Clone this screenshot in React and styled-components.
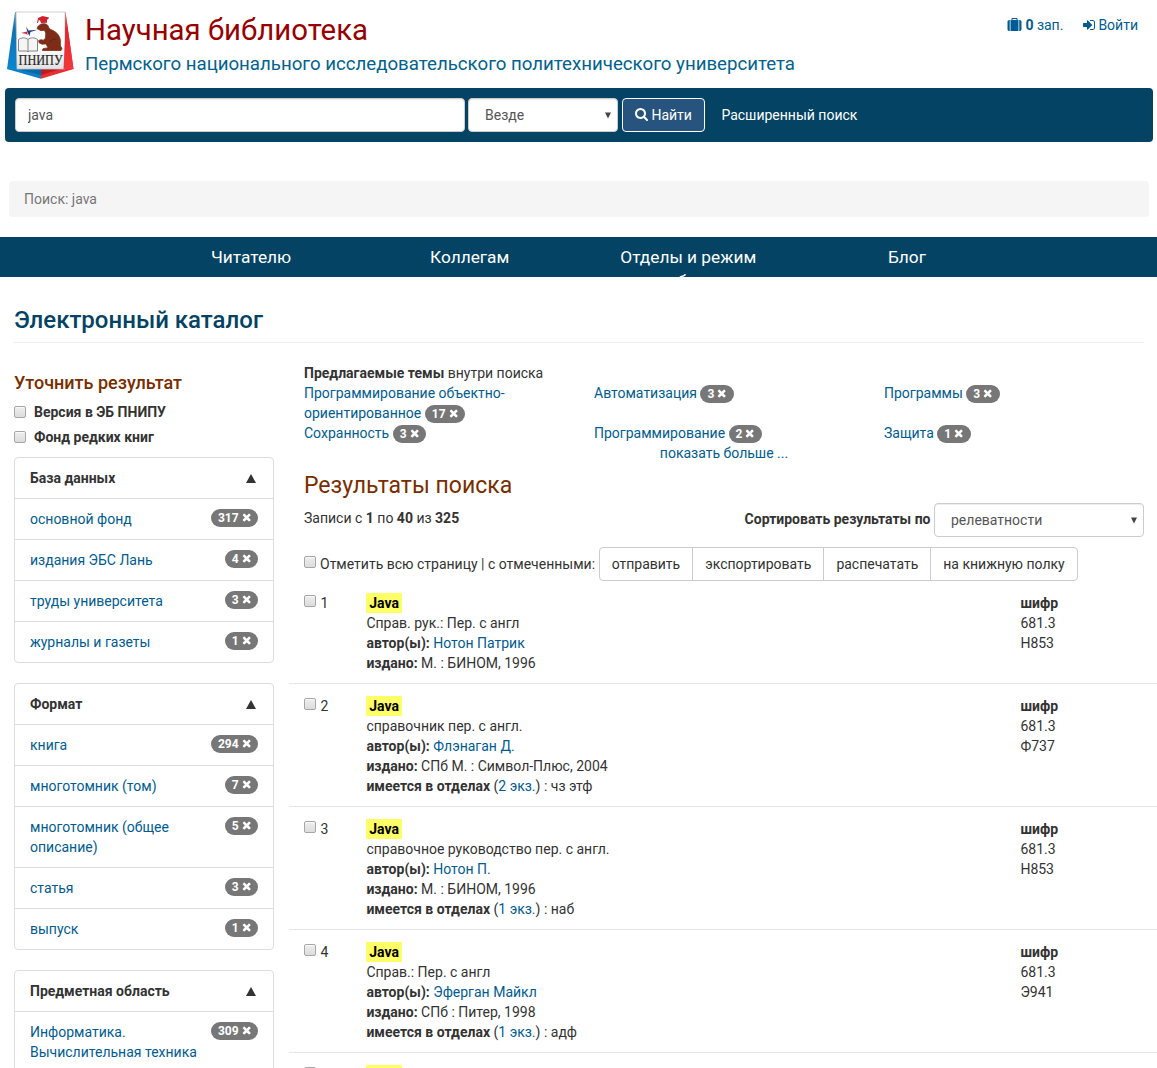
import React from "react";
import styled, { createGlobalStyle } from "styled-components";

const Global = createGlobalStyle`
  * { box-sizing: border-box; }
  html { overflow: hidden; }
  body {
    margin: 0;
    height: 1068px;
    overflow: hidden;
    background: #fff;
    color: #333;
    font: 14px/20px Roboto, "Liberation Sans", sans-serif;
  }
`;

const ICONS = {
  suitcase:
    "M640 256h512v-128h-512v128zm-352 0v1408h-64q-92 0-158-66t-66-158v-960q0-92 66-158t158-66h64zm1120 0v1408h-1024v-1408h128v-160q0-40 28-68t68-28h576q40 0 68 28t28 68v160h128zm384 224v960q0 92-66 158t-158 66h-64v-1408h64q92 0 158 66t66 158z",
  signIn:
    "M1312 896q0 26-19 45l-544 544q-19 19-45 19t-45-19-19-45v-288h-448q-26 0-45-19t-19-45v-384q0-26 19-45t45-19h448v-288q0-26 19-45t45-19 45 19l544 544q19 19 19 45zm352-352v704q0 119-84.5 203.5t-203.5 84.5h-320q-13 0-22.5-9.5t-9.5-22.5q0-4-1-20t-.5-26.5 3-23.5 10-19.5 20.5-6.5h320q66 0 113-47t47-113v-704q0-66-47-113t-113-47h-312l-11.5-1-11.5-3-8-5.5-7-9-2-13.5q0-4-1-20t-.5-26.5 3-23.5 10-19.5 20.5-6.5h320q119 0 203.5 84.5t84.5 203.5z",
  search:
    "M1216 832q0-185-131.5-316.5t-316.5-131.5-316.5 131.5-131.5 316.5 131.5 316.5 316.5 131.5 316.5-131.5 131.5-316.5zm512 832q0 52-38 90t-90 38q-54 0-90-38l-343-342q-179 124-399 124-143 0-273.5-55.5t-225-150-150-225-55.5-273.5 55.5-273.5 150-225 225-150 273.5-55.5 273.5 55.5 225 150 150 225 55.5 273.5q0 220-124 399l343 343q37 37 37 90z",
  times:
    "M1490 1322q0 40-28 68l-136 136q-28 28-68 28t-68-28l-294-294-294 294q-28 28-68 28t-68-28l-136-136q-28-28-28-68t28-68l294-294-294-294q-28-28-28-68t28-68l136-136q28-28 68-28t68 28l294 294 294-294q28-28 68-28t68 28l136 136q28 28 28 68t-28 68l-294 294 294 294q28 28 28 68z",
};

const Svg = styled.svg`
  fill: currentColor;
  flex: none;
`;

const Icon = ({ name, width, height, box }) => (
  <Svg width={width} height={height} viewBox={box} aria-hidden="true">
    <path d={ICONS[name]} />
  </Svg>
);

const Link = styled.a`
  color: #005c92;
  text-decoration: none;
  cursor: pointer;
`;

const Header = styled.header`
  display: flex;
  height: 88px;
  padding-left: 5px;
`;

const Brand = styled.div`
  padding: 12px 0 0 10px;
  flex: 1;
`;

const Title = styled.div`
  color: #990000;
  font-size: 29.4px;
  line-height: 36px;
`;

const Subtitle = styled.div`
  margin-top: 5px;
  color: #00628f;
  font-size: 18.66px;
  line-height: 22px;
`;

const Account = styled.nav`
  display: flex;
  gap: 20px;
  padding: 15px 19px 0 0;
`;

const AccountLink = styled(Link)`
  display: flex;
  align-items: center;
  gap: 3px;
  height: 20px;
  white-space: pre;
`;

const SearchBar = styled.form`
  display: flex;
  align-items: center;
  gap: 4px;
  height: 54px;
  margin: 0 4px 0 5px;
  padding: 0 10px;
  border-radius: 4px;
  background: #044364;
`;

const fieldStyles = `
  height: 34px;
  border: 1px solid #ccc;
  border-radius: 4px;
  background: #fff;
  color: #555;
  font: 14px/20px Roboto, "Liberation Sans", sans-serif;
  box-shadow: inset 0 1px 1px rgba(0, 0, 0, 0.075);
`;

const Query = styled.input`
  ${fieldStyles}
  width: 450px;
  margin-right: -1px;
  padding: 6px 12px;
  outline: 0;
`;

const SelectBox = styled.div`
  ${fieldStyles}
  display: flex;
  align-items: center;
  justify-content: space-between;
  width: ${(p) => p.$width}px;
  padding: 0 6px 0 16px;
  font-weight: 400;
`;

const Arrow = styled.svg`
  width: 6px;
  height: 7px;
  fill: #444;
`;

const Select = ({ width, children }) => (
  <SelectBox $width={width} role="combobox">
    {children}
    <Arrow viewBox="0 0 6 7">
      <path d="M0 .5h6L3 6.500z" />
    </Arrow>
  </SelectBox>
);

const SearchButton = styled.button`
  display: flex;
  align-items: center;
  gap: 3.4px;
  width: 83px;
  height: 34px;
  padding: 0 12px;
  border: 1px solid #fff;
  border-radius: 4px;
  background: #26547f;
  color: #fff;
  font: 14px/20px Roboto, "Liberation Sans", sans-serif;
`;

const Advanced = styled.a`
  margin-left: 12.4px;
  color: #fff;
`;

const Breadcrumb = styled.div`
  height: 36px;
  margin: 39px 8px 20px 9px;
  padding: 8px 15px;
  border-radius: 4px;
  background: #f5f5f5;
  color: #777;
`;

const MainNav = styled.nav`
  display: flex;
  justify-content: center;
  height: 40px;
  padding: 8px 0 0 1px;
  overflow: hidden;
  background: #044364;
`;

const NavItem = styled.a`
  width: 218.6px;
  padding: 0 20px;
  color: #fff;
  font-size: 17.3px;
  line-height: 24px;
  text-align: center;
`;

const PageTitle = styled.h1`
  height: 47px;
  margin: 19px 13px 0 14px;
  padding-top: 10px;
  border-bottom: 1px solid #eee;
  color: #044364;
  font-size: 24px;
  font-weight: 500;
  line-height: 28px;
`;

const Columns = styled.main`
  display: flex;
  align-items: flex-start;
`;

const Sidebar = styled.aside`
  flex: none;
  width: 260px;
  margin: 30px 15px 0 14px;
`;

const SideTitle = styled.h2`
  margin: 0 0 9px;
  color: #7a2e00;
  font-size: 18px;
  font-weight: 500;
  line-height: 20px;
`;

const Filters = styled.div`
  margin-bottom: 10px;
`;

const CheckLabel = styled.label`
  display: flex;
  align-items: center;
  gap: 8px;
  height: 20px;
  font-weight: 700;

  & + & {
    margin-top: 5px;
  }
`;

const Checkbox = styled.input.attrs({ type: "checkbox" })`
  appearance: none;
  flex: none;
  width: 12px;
  height: 12px;
  margin: 0;
  border: 1px solid #a6a6a6;
  border-radius: 2px;
  background: linear-gradient(#eee, #dcdcdc);
  box-shadow: inset 0 1px 1px rgba(255, 255, 255, 0.75);
`;

const Facet = styled.section`
  margin-bottom: 20px;
  border: 1px solid #ddd;
  border-radius: 4px;
`;

const FacetRow = styled.div`
  display: flex;
  justify-content: space-between;
  align-items: flex-start;
  padding: 10px 15px;

  & + & {
    border-top: 1px solid #ddd;
  }
`;

const FacetHead = styled(FacetRow)`
  font-weight: 700;
`;

const Triangle = styled.svg`
  width: 10px;
  height: 9px;
  margin: 6px 2px 0 0;
  fill: #333;
`;

const FacetLink = styled(Link)`
  max-width: 170px;
`;

const BadgeBox = styled.span`
  display: inline-flex;
  flex: none;
  align-items: center;
  gap: 3px;
  height: 18px;
  padding: 0 7px;
  border-radius: 10px;
  background: #777;
  color: #fff;
  font-size: 12px;
  font-weight: 700;
  line-height: 12px;
`;

const Badge = ({ count }) => (
  <BadgeBox>
    {count}
    <Icon name="times" width={9.4} height={12} box="192 128 1408 1792" />
  </BadgeBox>
);

const Content = styled.div`
  flex: 1;
  padding-top: 20px;
`;

const Inner = styled.div`
  margin: 0 13px 0 15px;
`;

const Topics = styled.div`
  display: grid;
  grid-template-columns: repeat(3, 290px);
  margin-right: -30px;
`;

const Topic = styled.div`
  max-width: 230px;

  ${BadgeBox} {
    margin-top: 2px;
    vertical-align: top;
  }
`;

const More = styled.div`
  text-align: center;
`;

const ResultsTitle = styled.h2`
  margin: 9px 0 3px;
  color: #7a2e00;
  font-size: 23px;
  font-weight: 400;
  line-height: 28px;
`;

const SortRow = styled.div`
  display: flex;
  justify-content: space-between;
  align-items: flex-start;
  height: 44px;
`;

const Count = styled.div`
  padding-top: 5px;
`;

const Sort = styled.div`
  display: flex;
  align-items: center;
  gap: 3.5px;
`;

const SortLabel = styled.b`
  padding-bottom: 2px;
`;

const BulkRow = styled.div`
  display: flex;
  align-items: center;
  gap: 4px;
  height: 34px;
  white-space: nowrap;

  & > input {
    margin-bottom: 4px;
  }
`;

const ButtonGroup = styled.div`
  display: flex;
`;

const GroupButton = styled.button`
  height: 34px;
  margin-left: -1px;
  padding: 0 12px;
  border: 1px solid #ccc;
  background: #fff;
  color: #333;
  font: 14px/20px Roboto, "Liberation Sans", sans-serif;

  &:first-child {
    margin-left: -0.4px;
    border-radius: 4px 0 0 4px;
  }

  &:last-child {
    border-radius: 0 4px 4px 0;
  }
`;

const RecordRow = styled.article`
  display: grid;
  grid-template-columns: 62.4px 654px 1fr;
  padding: 12px 0 10px 15px;
  border-bottom: 1px solid #e5e5e5;
`;

const Number = styled.div`
  display: flex;
  gap: 4.5px;

  & > input {
    margin-top: 2px;
  }
`;

const Mark = styled.strong`
  display: block;
  width: fit-content;
  height: 20px;
  padding: 0 2.8px;
  background: #ffff66;
  color: #000;
`;

const LogoSvg = styled.svg`
  flex: none;
  width: 70px;
  height: 70px;
  margin-top: 10px;
`;

const Logo = () => (
  <LogoSvg viewBox="5 10 70 70">
    <defs>
      <linearGradient id="blue" x1="0" y1="0" x2="0" y2="1">
        <stop offset="0" stopColor="#5b94bd" />
        <stop offset=".3" stopColor="#0d72b4" />
        <stop offset="1" stopColor="#0a86d0" />
      </linearGradient>
      <linearGradient id="red" x1="0" y1="0" x2="0" y2="1">
        <stop offset="0" stopColor="#d8777a" />
        <stop offset=".3" stopColor="#e4252b" />
        <stop offset="1" stopColor="#f03a3c" />
      </linearGradient>
      <linearGradient id="paper" x1="0" y1="0" x2="0" y2="1">
        <stop offset=".6" stopColor="#fff" />
        <stop offset="1" stopColor="#e2e2e2" />
      </linearGradient>
    </defs>
    <path d="M15 12L7 69l10.500 1.500L17 12z" fill="url(#blue)" />
    <path d="M65.500 12l8 57-13 1.500L64 12z" fill="url(#red)" />
    <path d="M7 69h34v9.700z" fill="#0a80c8" />
    <path d="M17 69h24v6z" fill="#0868a8" />
    <path d="M41 69h32.500L41 78.700z" fill="#ea2c30" />
    <path d="M41 69h20l-20 6z" fill="#b51c24" />
    <path d="M16 12h49v57H17z" fill="url(#paper)" stroke="#c4c4c4" strokeWidth=".8" />
    <path d="M65.500 12l8 57H63.500l1.500-30z" fill="url(#red)" />
    <path
      d="M37 28.500c1-3 3-4.500 6-4.800 3-.2 5 1 5.500 3.300.5 2 2.500 2.600 4.500 3.500 4 2 6.500 5 7.300 9 .4 2.500-.2 4.500.2 6.500l1.500 2.800-1 1.700H42.500c-.5-1.500.7-2.200 3-2.300l2.500-.3-2-4-4 .3-3-1.500-.3-2.200 2.500-.8 2.300.6 2-2.300.3-5-1.500-2.700-3.300.4z"
      fill="#7d2d17"
      stroke="#7d2d17"
      strokeWidth=".8"
    />
    <path d="M50 42c1-2.500 3.500-3.500 6-2.500" fill="none" stroke="#592015" strokeWidth=".7" />
    <path d="M38 18l4.500-2 6.500 1.500-.7 1.500-1.300.7v3l-6 .2-1-2.700-1.500.3-.5 2.500h-1z" fill="#cf2030" />
    <path
      d="M18.500 39.500c3-2.200 7-2.200 9.500 0 2.500-2.200 6.500-2.200 9.500 0v11.500h-8l-1.500.7-1.500-.7h-8zM28 39.500v12"
      fill="#f5f5f5"
      stroke="#777"
      strokeWidth=".9"
    />
    <path d="M21 33l6-1.500.7 3.500-2-1.200z" fill="#d62434" />
    <path d="M26 26.500l2.500 4 9-.8-7 2.300-1 4-2-3.500z" fill="#263c83" />
    <text
      x="40.600"
      y="65"
      textAnchor="middle"
      textLength="44"
      lengthAdjust="spacingAndGlyphs"
      fontFamily="Liberation Serif, serif"
      fontSize="14"
      fill="#292929"
      stroke="#292929"
      strokeWidth=".2"
    >
      ПНИПУ
    </text>
  </LogoSvg>
);

const facets = [
  {
    title: "База данных",
    items: [
      ["основной фонд", 317],
      ["издания ЭБС Лань", 4],
      ["труды университета", 3],
      ["журналы и газеты", 1],
    ],
  },
  {
    title: "Формат",
    items: [
      ["книга", 294],
      ["многотомник (том)", 7],
      ["многотомник (общее описание)", 5],
      ["статья", 3],
      ["выпуск", 1],
    ],
  },
  {
    title: "Предметная область",
    items: [["Информатика. Вычислительная техника", 309]],
  },
];

const topics = [
  ["Программирование объектно-ориентированное", 17],
  ["Автоматизация", 3],
  ["Программы", 3],
  ["Сохранность", 3],
  ["Программирование", 2],
  ["Защита", 1],
];

const records = [
  { note: "Справ. рук.: Пер. с англ", author: "Нотон Патрик", issued: "М. : БИНОМ, 1996", code: "Н853" },
  { note: "справочник пер. с англ.", author: "Флэнаган Д.", issued: "СПб М. : Символ-Плюс, 2004", copies: "2 экз.", place: "чз этф", code: "Ф737" },
  { note: "справочное руководство пер. с англ.", author: "Нотон П.", issued: "М. : БИНОМ, 1996", copies: "1 экз.", place: "наб", code: "Н853" },
  { note: "Справ.: Пер. с англ", author: "Эферган Майкл", issued: "СПб : Питер, 1998", copies: "1 экз.", place: "адф", code: "Э941" },
  {},
];

const Record = ({ index, data }) => (
  <RecordRow>
    <Number>
      <Checkbox />
      {index}
    </Number>
    <div>
      <Mark>Java</Mark>
      {data.note && (
        <>
          <div>{data.note}</div>
          <div>
            <b>автор(ы):</b> <Link>{data.author}</Link>
          </div>
          <div>
            <b>издано:</b> {data.issued}
          </div>
        </>
      )}
      {data.copies && (
        <div>
          <b>имеется в отделах</b> (<Link>{data.copies}</Link>) : {data.place}
        </div>
      )}
    </div>
    {data.code && (
      <div>
        <b>шифр</b>
        <div>681.3</div>
        <div>{data.code}</div>
      </div>
    )}
  </RecordRow>
);

export default function App() {
  return (
    <>
      <Global />
      <Header>
        <Logo />
        <Brand>
          <Title>Научная библиотека</Title>
          <Subtitle>Пермского национального исследовательского политехнического университета</Subtitle>
        </Brand>
        <Account>
          <AccountLink>
            <Icon name="suitcase" width={15} height={14} box="0 0 1792 1792" />
            <span>
              <b>0</b> зап.
            </span>
          </AccountLink>
          <AccountLink>
            <Icon name="signIn" width={12} height={14} box="128 0 1536 1792" />
            Войти
          </AccountLink>
        </Account>
      </Header>
      <SearchBar>
        <Query defaultValue="java" />
        <Select width={150}>Везде</Select>
        <SearchButton type="button">
          <Icon name="search" width={13} height={14} box="64 128 1664 1792" />
          Найти
        </SearchButton>
        <Advanced>Расширенный поиск</Advanced>
      </SearchBar>
      <Breadcrumb>Поиск: java</Breadcrumb>
      <MainNav>
        <NavItem>Читателю</NavItem>
        <NavItem>Коллегам</NavItem>
        <NavItem>Отделы и режим работы</NavItem>
        <NavItem>Блог</NavItem>
      </MainNav>
      <PageTitle>Электронный каталог</PageTitle>
      <Columns>
        <Sidebar>
          <SideTitle>Уточнить результат</SideTitle>
          <Filters>
            <CheckLabel>
              <Checkbox />
              Версия в ЭБ ПНИПУ
            </CheckLabel>
            <CheckLabel>
              <Checkbox />
              Фонд редких книг
            </CheckLabel>
          </Filters>
          {facets.map((facet) => (
            <Facet key={facet.title}>
              <FacetHead>
                {facet.title}
                <Triangle viewBox="0 0 10 9" preserveAspectRatio="none">
                  <path d="M5 0l5 9H0z" />
                </Triangle>
              </FacetHead>
              {facet.items.map(([label, count]) => (
                <FacetRow key={label}>
                  <FacetLink>{label}</FacetLink>
                  <Badge count={count} />
                </FacetRow>
              ))}
            </Facet>
          ))}
        </Sidebar>
        <Content>
          <Inner>
            <div>
              <b>Предлагаемые темы</b> внутри поиска
            </div>
            <Topics>
              {topics.map(([label, count]) => (
                <Topic key={label}>
                  <Link>{label}</Link> <Badge count={count} />
                </Topic>
              ))}
            </Topics>
            <More>
              <Link>показать больше ...</Link>
            </More>
            <ResultsTitle>Результаты поиска</ResultsTitle>
            <SortRow>
              <Count>
                Записи с <b>1</b> по <b>40</b> из <b>325</b>
              </Count>
              <Sort>
                <SortLabel>Сортировать результаты по</SortLabel>
                <Select width={210}>релеватности</Select>
              </Sort>
            </SortRow>
            <BulkRow>
              <Checkbox />
              Отметить всю страницу | с отмеченными:
              <ButtonGroup>
                <GroupButton>отправить</GroupButton>
                <GroupButton>экспортировать</GroupButton>
                <GroupButton>распечатать</GroupButton>
                <GroupButton>на книжную полку</GroupButton>
              </ButtonGroup>
            </BulkRow>
          </Inner>
          {records.map((data, i) => (
            <Record key={i} index={i + 1} data={data} />
          ))}
        </Content>
      </Columns>
    </>
  );
}
